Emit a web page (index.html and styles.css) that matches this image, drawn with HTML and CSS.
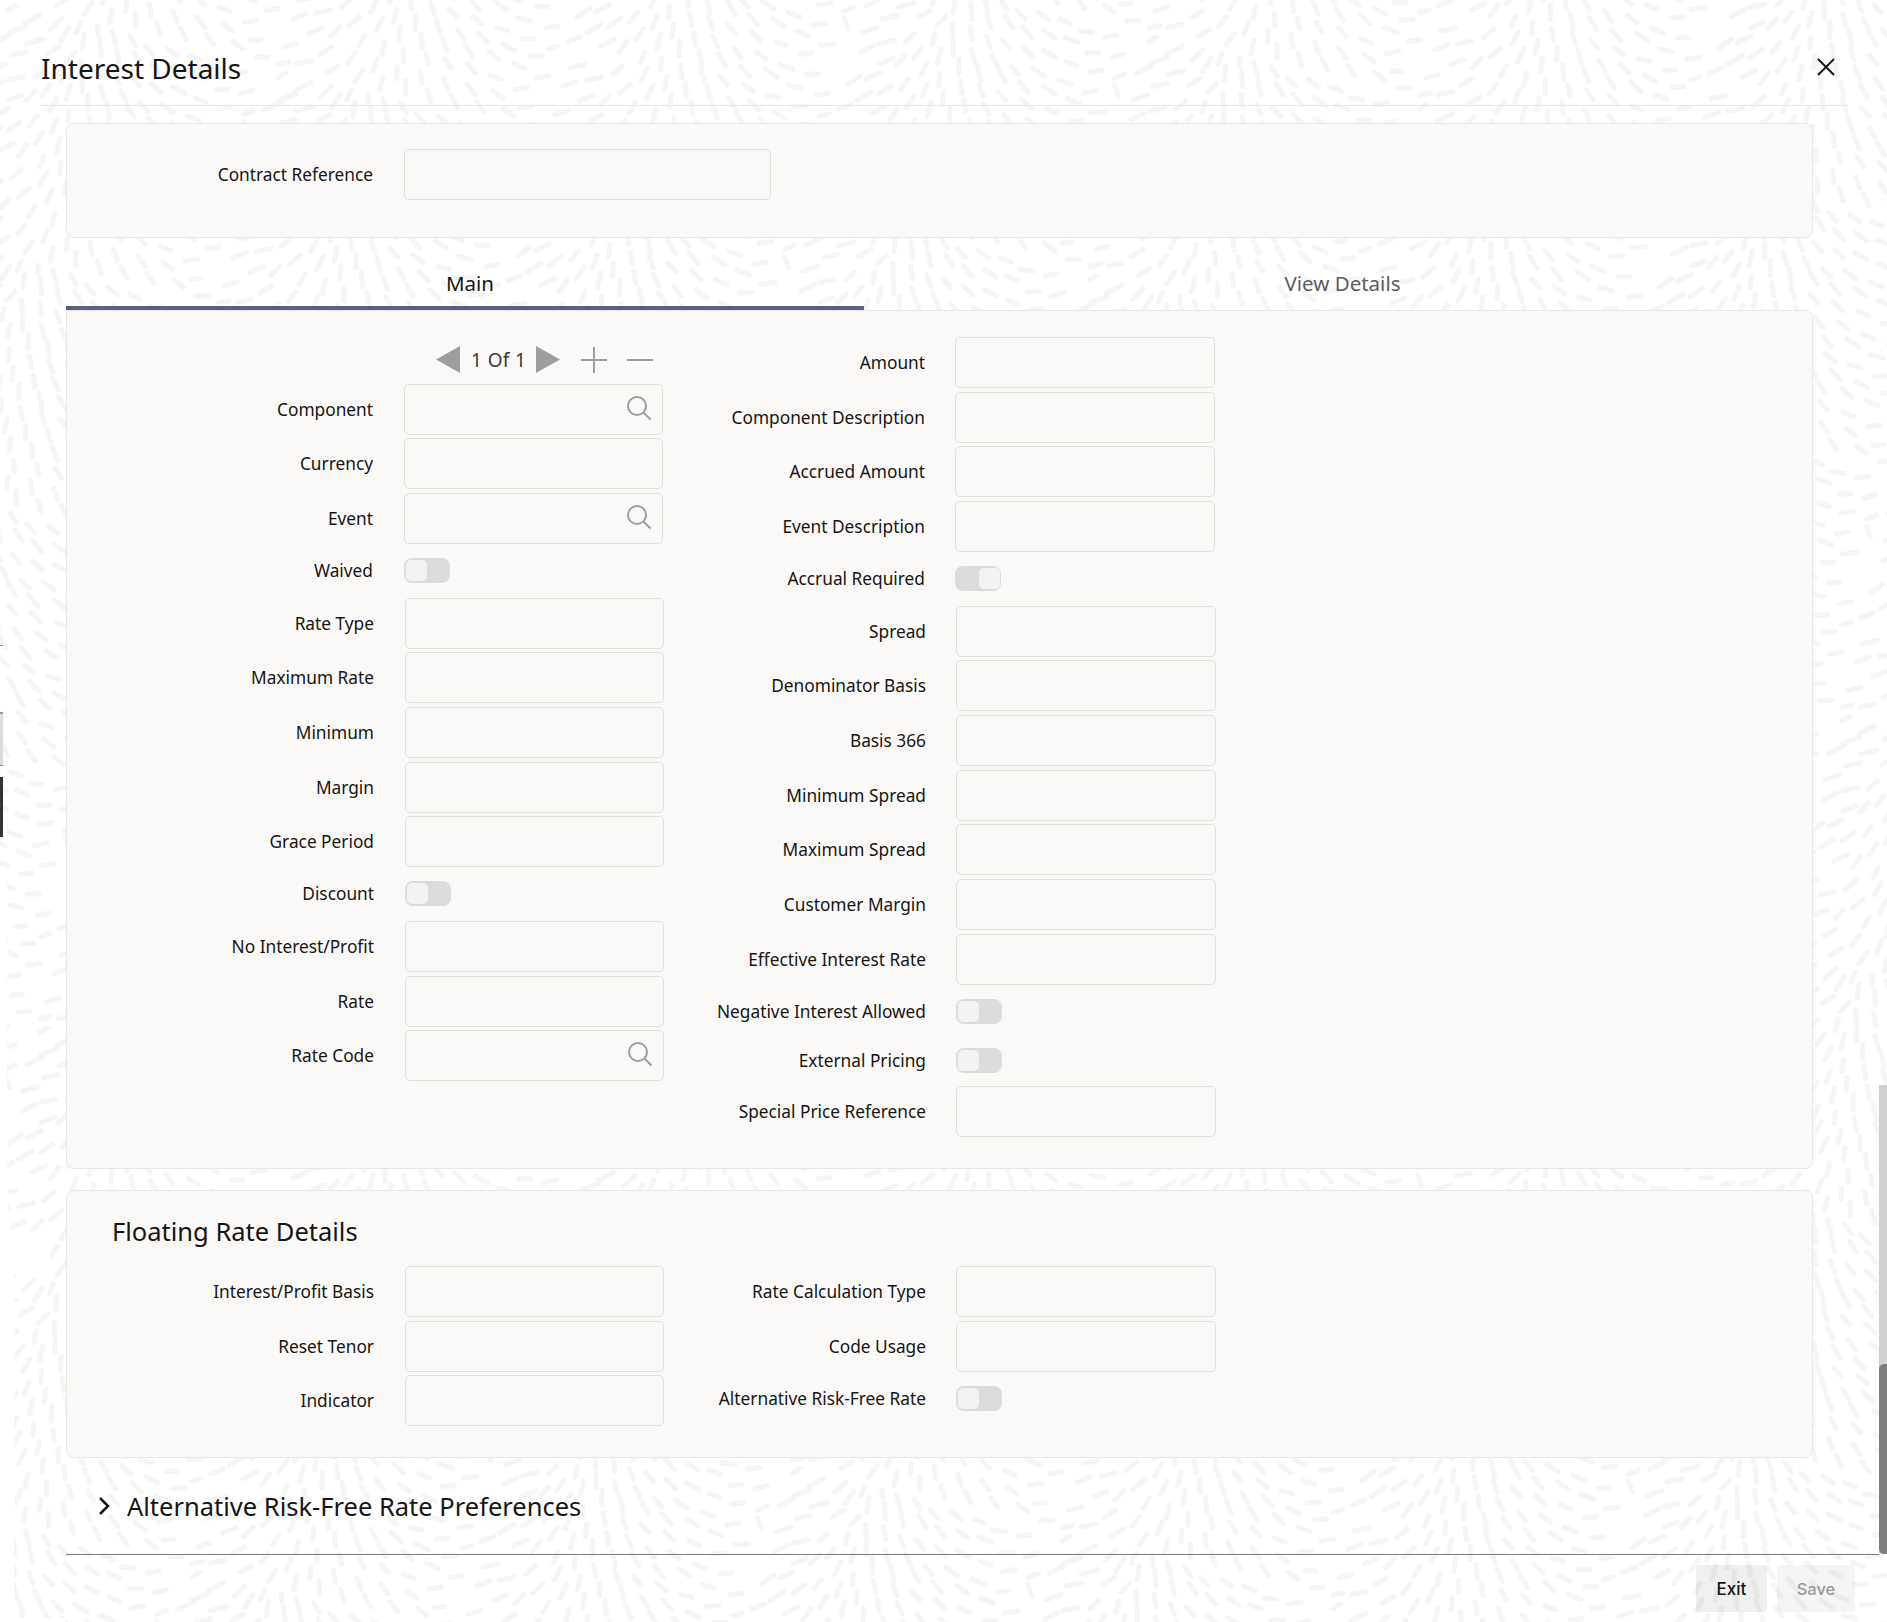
FILE: index.html
```html
<!DOCTYPE html>
<html lang="en">
<head>
<meta charset="utf-8">
<title>Interest Details</title>
<link rel="stylesheet" href="styles.css">
</head>
<body>
<svg class="texture" width="1887" height="1622" aria-hidden="true">
  <defs>
    <pattern id="rice" width="340" height="300" patternUnits="userSpaceOnUse" patternTransform="rotate(14) scale(.82)">
      <g fill="none" stroke="#f5f5f4" stroke-width="6.4" stroke-linecap="round">
        <path d="M12 10l14 -16M36 20l16 -14M20 36l18 -12M6 52l16 -14M44 44l18 -10M30 62l16 -8M68 20l10 -16M84 30l6 -18M72 50l12 -12M100 16l2 -14M112 34l-2 -18M96 54l8 -14M126 12l-4 -14M136 36l-6 -18M118 62l-4 -14M150 18l-8 -14M160 40l-8 -16M142 60l-6 -14M174 14l-10 -10M186 34l-12 -12M166 64l-8 -12M198 20l-12 -8M212 40l-14 -10M190 60l-12 -8M226 14l-14 -6M240 34l-16 -6M218 62l-14 -8M254 12l-14 -2M268 32l-16 -2M246 56l-16 -4M282 16l-16 2M296 38l-14 4M274 60l-14 -2M312 12l-14 6M326 32l-14 8M304 58l-14 6M332 56l-10 8"/>
        <path d="M10 84l16 -10M34 92l16 -8M14 108l14 -12M40 116l14 -10M64 82l8 -12M78 100l6 -14M60 112l8 -14M96 78l0 -14M108 98l0 -18M92 116l4 -16M124 84l-4 -16M136 104l-4 -18M116 124l-2 -14M152 86l-8 -14M164 106l-8 -16M146 126l-6 -14M180 84l-10 -12M194 100l-12 -12M172 124l-8 -12M208 88l-12 -8M224 106l-14 -10M200 122l-12 -8M238 82l-16 -6M256 100l-16 -6M232 124l-14 -8M272 84l-16 -2M288 104l-16 -2M264 122l-14 -2M304 84l-14 6M320 106l-16 6M296 124l-14 4M332 84l-8 -12"/>
        <path d="M8 150l12 -14M28 138l14 -12M24 166l14 -14M48 152l12 -14M4 182l14 -10M44 178l14 -12M72 140l6 -14M84 160l6 -16M68 180l6 -16M100 142l2 -16M112 164l0 -18M96 186l2 -14M126 146l-2 -16M140 166l-4 -18M122 188l-2 -14M156 148l-6 -14M170 170l-8 -16M150 190l-6 -14M184 144l-10 -12M198 164l-12 -12M178 188l-8 -12M214 150l-12 -10M230 170l-14 -10M206 186l-12 -8M244 144l-14 -6M262 162l-16 -6M238 186l-14 -6M278 148l-16 -2M294 168l-16 0M270 186l-14 0M310 146l-14 4M328 166l-14 6M304 188l-14 4M334 190l-10 6"/>
        <path d="M14 212l16 -8M38 222l16 -8M12 236l14 -10M36 248l14 -10M66 208l10 -14M80 228l10 -14M62 246l8 -14M102 206l4 -16M114 226l4 -18M98 248l4 -14M132 210l0 -16M144 230l-2 -16M128 252l0 -16M160 212l-4 -16M174 232l-6 -16M156 254l-4 -14M190 208l-8 -14M204 228l-10 -14M186 250l-6 -12M220 210l-10 -10M236 228l-12 -12M214 248l-10 -10M250 206l-14 -8M268 224l-14 -8M244 246l-12 -8M284 208l-16 -4M302 226l-16 -2M276 246l-14 -2M318 206l-14 4M332 228l-14 6M310 248l-14 6"/>
        <path d="M10 272l14 -8M30 288l16 -8M8 294l12 -6M54 270l12 -12M68 290l12 -12M90 272l6 -14M104 292l6 -16M122 274l2 -16M136 294l0 -16M152 276l-2 -14M168 292l-4 -16M184 274l-6 -14M200 294l-8 -14M216 274l-8 -12M232 292l-10 -12M250 272l-12 -10M266 290l-12 -10M284 268l-14 -6M302 286l-14 -6M320 270l-12 4M334 288l-14 4"/>
      </g>
    </pattern>
  </defs>
  <rect width="1887" height="1622" fill="url(#rice)"/>
</svg>

<div class="edge-bits" aria-hidden="true">
  <span class="gap gap-narrow"></span>
  <span class="gap gap-wide"></span>
  <span class="gap gap-seam"></span>
  <span class="gap gap-floor"></span>
  <span class="bit bit-line"></span>
  <span class="bit bit-grey"></span>
  <span class="bit bit-dark"></span>
</div>

<div class="scrollbar" aria-hidden="true"><span class="thumb"></span></div>

<main class="dialog">
  <header class="head">
    <h1 class="title">Interest Details</h1>
    <svg class="close" width="18" height="18" viewBox="0 0 18 18" aria-label="Close"><path d="M1 1l16 16M17 1L1 17" fill="none" stroke="#161513" stroke-width="2"/></svg>
  </header>

  <div class="body">
    <section class="panel panel-ref">
      <div class="row"><label class="lbl">Contract Reference</label><span class="input input-wide"></span></div>
    </section>

    <nav class="tabs">
      <div class="tab tab-on">Main</div>
      <div class="tab tab-off">View Details</div>
    </nav>

    <section class="panel panel-main">
      <div class="col col-left">
        <div class="pager">
          <svg width="24" height="27" viewBox="0 0 24 27"><path d="M24 0v27L0 13.5z" fill="#a09e9c"/></svg>
          <span class="pager-text">1 Of 1</span>
          <svg width="24" height="27" viewBox="0 0 24 27"><path d="M0 0v27l24-13.5z" fill="#a09e9c"/></svg>
          <svg class="pager-plus" width="26" height="26" viewBox="0 0 26 26"><path d="M0 13h26M13 0v26" stroke="#a09e9c" stroke-width="2"/></svg>
          <svg class="pager-minus" width="26" height="26" viewBox="0 0 26 26"><path d="M0 13h26" stroke="#a09e9c" stroke-width="2"/></svg>
        </div>
        <div class="row"><label class="lbl">Component</label><span class="input"><svg class="lens" width="26" height="26" viewBox="0 0 26 26"><circle cx="11" cy="11" r="9" fill="none" stroke="#a09e9c" stroke-width="2"/><path d="M17.5 17.5l7 7" stroke="#a09e9c" stroke-width="2"/></svg></span></div>
        <div class="row"><label class="lbl">Currency</label><span class="input"></span></div>
        <div class="row"><label class="lbl">Event</label><span class="input"><svg class="lens" width="26" height="26" viewBox="0 0 26 26"><circle cx="11" cy="11" r="9" fill="none" stroke="#a09e9c" stroke-width="2"/><path d="M17.5 17.5l7 7" stroke="#a09e9c" stroke-width="2"/></svg></span></div>
        <div class="row row-toggle"><label class="lbl">Waived</label><span class="toggle"></span></div>
        <div class="shift">
          <div class="row"><label class="lbl">Rate Type</label><span class="input"></span></div>
          <div class="row"><label class="lbl">Maximum Rate</label><span class="input"></span></div>
          <div class="row"><label class="lbl">Minimum</label><span class="input"></span></div>
          <div class="row"><label class="lbl">Margin</label><span class="input"></span></div>
          <div class="row"><label class="lbl">Grace Period</label><span class="input"></span></div>
          <div class="row row-toggle"><label class="lbl">Discount</label><span class="toggle"></span></div>
          <div class="row"><label class="lbl">No Interest/Profit</label><span class="input"></span></div>
          <div class="row"><label class="lbl">Rate</label><span class="input"></span></div>
          <div class="row"><label class="lbl">Rate Code</label><span class="input"><svg class="lens" width="26" height="26" viewBox="0 0 26 26"><circle cx="11" cy="11" r="9" fill="none" stroke="#a09e9c" stroke-width="2"/><path d="M17.5 17.5l7 7" stroke="#a09e9c" stroke-width="2"/></svg></span></div>
        </div>
      </div>

      <div class="col col-right">
        <div class="row"><label class="lbl">Amount</label><span class="input"></span></div>
        <div class="row"><label class="lbl">Component Description</label><span class="input"></span></div>
        <div class="row"><label class="lbl">Accrued Amount</label><span class="input"></span></div>
        <div class="row"><label class="lbl">Event Description</label><span class="input"></span></div>
        <div class="row row-toggle"><label class="lbl">Accrual Required</label><span class="toggle toggle-on"></span></div>
        <div class="shift">
          <div class="row"><label class="lbl">Spread</label><span class="input"></span></div>
          <div class="row"><label class="lbl">Denominator Basis</label><span class="input"></span></div>
          <div class="row"><label class="lbl">Basis 366</label><span class="input"></span></div>
          <div class="row"><label class="lbl">Minimum Spread</label><span class="input"></span></div>
          <div class="row"><label class="lbl">Maximum Spread</label><span class="input"></span></div>
          <div class="row"><label class="lbl">Customer Margin</label><span class="input"></span></div>
          <div class="row"><label class="lbl">Effective Interest Rate</label><span class="input"></span></div>
          <div class="row row-toggle row-slim"><label class="lbl">Negative Interest Allowed</label><span class="toggle"></span></div>
          <div class="row row-toggle row-slim"><label class="lbl">External Pricing</label><span class="toggle"></span></div>
          <div class="row"><label class="lbl">Special Price Reference</label><span class="input"></span></div>
        </div>
      </div>
    </section>

    <section class="panel panel-float">
      <h2 class="float-title">Floating Rate Details</h2>
      <div class="float-cols">
        <div class="col col-left shift">
          <div class="row"><label class="lbl">Interest/Profit Basis</label><span class="input"></span></div>
          <div class="row"><label class="lbl">Reset Tenor</label><span class="input"></span></div>
          <div class="row"><label class="lbl">Indicator</label><span class="input"></span></div>
        </div>
        <div class="col col-right">
          <div class="row"><label class="lbl">Rate Calculation Type</label><span class="input"></span></div>
          <div class="row"><label class="lbl">Code Usage</label><span class="input"></span></div>
          <div class="row row-toggle"><label class="lbl">Alternative Risk-Free Rate</label><span class="toggle"></span></div>
        </div>
      </div>
    </section>

    <div class="collapse">
      <svg width="12" height="18" viewBox="0 0 12 18"><path d="M2 1l8 8-8 8" fill="none" stroke="#161513" stroke-width="2.5"/></svg>
      <h2 class="collapse-title">Alternative Risk-Free Rate Preferences</h2>
    </div>
  </div>

  <footer class="foot">
    <button class="btn btn-exit">Exit</button>
    <button class="btn btn-save">Save</button>
  </footer>
</main>
</body>
</html>
```
FILE: styles.css
```css
* { box-sizing: border-box; }
html, body { margin: 0; padding: 0; }
body {
  position: relative;
  width: 1887px;
  height: 1622px;
  overflow: hidden;
  background: #fff;
  color: #161513;
  font-family: "Noto Sans", "Liberation Sans", sans-serif;
  font-size: 17.3px;
}
.texture { position: absolute; left: 0; top: 0; }
.gap { position: absolute; background: #fff; }
.gap-narrow { left: 0; top: 880px; width: 7px; height: 355px; }
.gap-wide { left: 0; top: 1235px; width: 14px; height: 387px; }
.gap-seam { left: 0; top: 1235px; width: 50px; height: 33px; }
.gap-floor { left: 0; top: 1618px; width: 65px; height: 4px; }
.bit { position: absolute; left: 0; width: 3px; }
.bit-line { top: 645px; height: 1px; background: #8f8f8f; }
.bit-grey { top: 712px; height: 54px; background: #dcdcdc; border-top: 2px solid #9a9a9a; border-bottom: 1px solid #8a8a8a; }
.bit-dark { top: 777px; height: 60px; background: #333; }
.scrollbar { position: absolute; right: 0; top: 1085px; width: 8px; height: 469px; background: #d0d0d0; }
.thumb { position: absolute; left: 0; right: 0; bottom: 0; height: 190px; background: #7d7d7d; border-radius: 5px 0 0 5px; }

.dialog { position: relative; display: flex; flex-direction: column; height: 1622px; }
.head {
  margin: 0 39px 0 41px;
  height: 106px;
  border-bottom: 1px solid #e8e6e3;
  display: flex;
  align-items: center;
  justify-content: space-between;
  padding: 32px 13px 0 0;
}
.title { margin: 0 0 2px; font-size: 28px; font-weight: 400; line-height: 36px; }
.close { margin-bottom: 3px; }

.body { margin-left: 66px; width: 1747px; padding-top: 17px; flex: 0 0 1448px; }
.panel { background: #fbf9f8; border: 1px solid #e9e7e4; border-radius: 8px; }
.panel-ref { height: 115px; padding: 25px 0 0 0; }
.panel-ref .row { height: 51px; }

.tabs { display: flex; height: 72px; }
.tab { padding-top: 30px; font-size: 20.5px; line-height: 30px; text-align: center; }
.tab-on { flex: 0 0 798px; padding-left: 10px; border-bottom: 4px solid #5b5f7f; }
.tab-off { flex: 1 1 auto; color: #5f5d5a; padding-left: 8px; }

.panel-main { height: 859px; display: flex; border-top-left-radius: 0; padding-top: 26px; }
.col { flex: 0 0 auto; }
.col-left { width: 598px; padding-top: 46.6px; }
.col-right { width: 620px; }

.pager { position: absolute; display: flex; align-items: center; margin: -37.6px 0 0 369px; height: 27px; }
.pager-text { margin: 0 10px 0 11px; font-size: 19px; color: #3a3836; word-spacing: 1px; }
.pager-plus { margin-left: 21px; }
.pager-minus { margin-left: 20px; }

.row { display: flex; align-items: flex-start; height: 54.7px; }
.row-toggle { height: 49.9px; align-items: center; padding-bottom: 4px; }
.row-slim { height: 49px; padding-bottom: 2px; }
.lbl { flex: 0 0 306px; text-align: right; line-height: 52px; white-space: nowrap; }
.row-toggle .lbl { line-height: 25px; }
.input {
  position: relative;
  flex: 0 0 259px;
  height: 51px;
  margin-left: 31px;
  border: 1px solid #e1dfdc;
  border-radius: 5px;
  background: #fbf9f8;
}
.input-wide { flex-basis: 367px; }
.lens { position: absolute; right: 10px; top: 10px; }
.toggle {
  position: relative;
  flex: 0 0 46px;
  height: 25px;
  margin-left: 31px;
  border-radius: 8px;
  background: #dedcda;
}
.toggle::after {
  content: "";
  position: absolute;
  left: 2px;
  top: 2px;
  width: 21px;
  height: 21px;
  border-radius: 5px;
  background: #f5f3f1;
}
.toggle-on::after { left: 24px; }
.shift { margin-left: 1px; }
.col-right .lbl { flex-basis: 260px; }
.col-right .input, .col-right .toggle { margin-left: 30px; }
.col-right .input { flex-basis: 260px; }

.panel-float { height: 268px; margin-top: 21px; }
.float-title { margin: 0; padding: 22px 0 0 45px; height: 75px; font-size: 25.5px; line-height: 36px; font-weight: 400; }
.float-cols { display: flex; }
.float-cols .col-left { padding-top: 0; width: 598px; }

.collapse { display: flex; align-items: center; gap: 17px; height: 96px; padding: 0 0 0 32px; }
.collapse-title { margin: 0; font-size: 25.5px; line-height: 36px; font-weight: 400; white-space: nowrap; }

.foot {
  position: absolute;
  left: 66px;
  right: 8px;
  top: 1554px;
  height: 68px;
  border-top: 1px solid #7c7c7c;
  display: flex;
  justify-content: flex-end;
  gap: 10px;
  padding: 10px 24px 0 0;
}
.btn { height: 47px; border: 0; border-radius: 4px; background: rgba(0,0,0,.06); font-family: Inter, "Liberation Sans", sans-serif; font-size: 17px; font-weight: 500; }
.btn-exit { width: 71px; color: #161513; }
.btn-save { width: 78px; color: #9b9997; background: rgba(0,0,0,.04); font-size: 16.5px; }
```
